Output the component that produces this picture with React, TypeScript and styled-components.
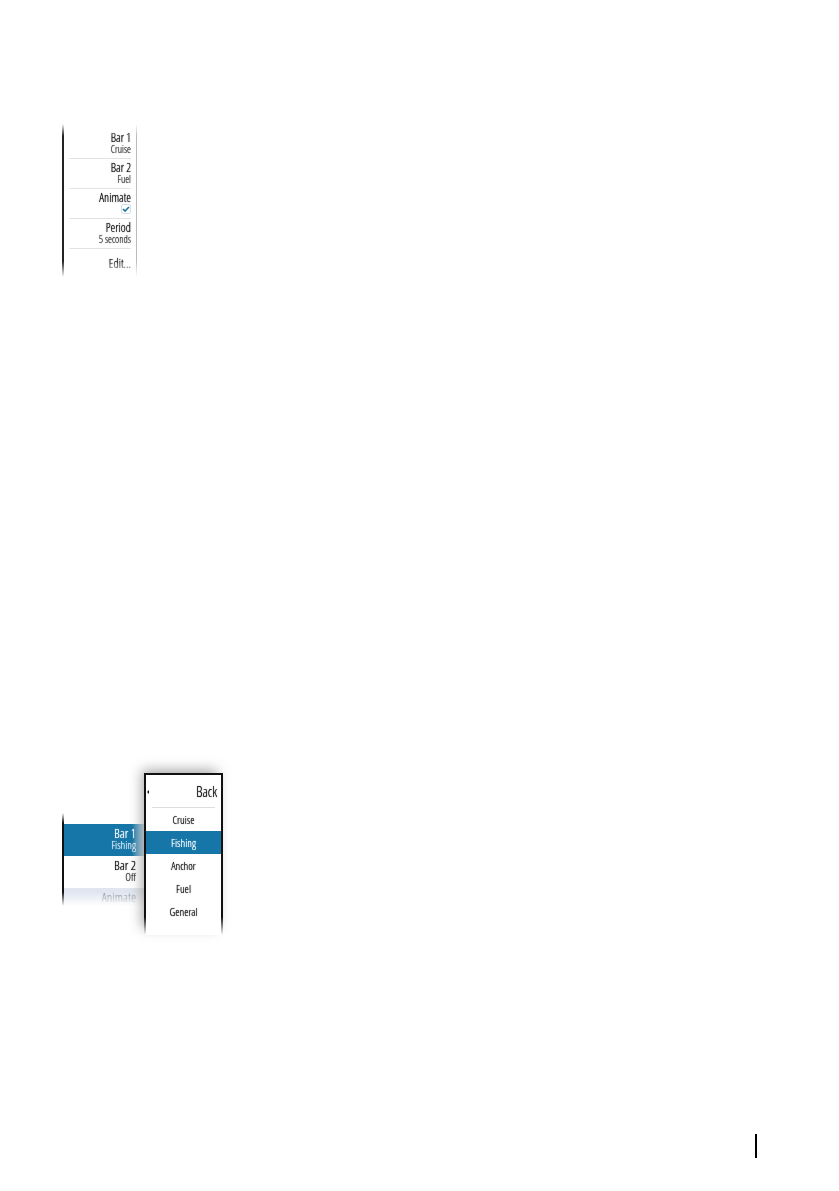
import { useState } from "react";
import styled, { createGlobalStyle } from "styled-components";

const GlobalStyle = createGlobalStyle`
    * {
        box-sizing: border-box;
    }

    body {
        margin: 0;
        background-color: #fff;
        color: #111;
        font-family: "Open Sans Condensed Light", "Liberation Sans Narrow",
            "Noto Sans", sans-serif;
        text-shadow: 0 0 1px currentColor;
    }

    button {
        border: none;
        background: none;
        color: inherit;
        font-family: inherit;
        text-shadow: inherit;
        cursor: pointer;
    }
`;

const Page = styled.main`
    display: flex;
    flex-direction: column;
    align-items: flex-start;
    min-height: 100vh;
    padding: 124px 82px 33px 62px;
`;

const Menu = styled.section`
    width: 75px;
    border-left: 2px solid #222;
    border-right: 1px solid #bbb;
    padding: 5px 5px 0 5px;
    mask-image: linear-gradient(
        transparent,
        #000 12px,
        #000 calc(100% - 16px),
        transparent
    );
`;

const MenuRow = styled.button`
    display: flex;
    flex-direction: column;
    align-items: flex-end;
    justify-content: center;
    width: 100%;
    height: 30px;
    padding: 0 0 1px;
    border-bottom: 1px solid #e2e2e2;

    &:last-child {
        height: 28px;
        padding: 2px 0 0;
        border-bottom: none;
    }
`;

const CheckRow = styled(MenuRow).attrs({ as: "label" })`
    cursor: pointer;
`;

const Label = styled.span`
    font-size: 12px;
    line-height: 12px;
`;

const Value = styled.span`
    font-size: 10px;
    line-height: 10px;
    opacity: 0.85;
`;

const Check = styled.input`
    appearance: none;
    width: 10px;
    height: 10px;
    margin: 0;
    border: 1px solid #d5dfe4;
    border-radius: 2px;
    background-color: #fff;

    &:checked {
        background-image: url("data:image/svg+xml,%3Csvg xmlns='http://www.w3.org/2000/svg' viewBox='0 0 8 8'%3E%3Cpath d='M1 4l2 2 4-4' fill='none' stroke='%231676a8' stroke-width='1.6'/%3E%3C/svg%3E");
    }
`;

const Picker = styled.section`
    display: flex;
    align-items: flex-start;
    margin-top: 496px;
`;

const SideMenu = styled.div`
    width: 82px;
    margin-top: 40px;
    padding-top: 11px;
    border-left: 2px solid #111;
    mask-image: linear-gradient(
        transparent,
        #000 10px,
        #000 calc(100% - 14px),
        transparent
    );
`;

const SideRow = styled.button<{ $active?: boolean }>`
    display: flex;
    flex-direction: column;
    align-items: flex-end;
    justify-content: center;
    width: 100%;
    height: 32px;
    padding: 0 8px 3px 0;
    background: ${({ $active }) =>
        $active
            ? "linear-gradient(to right, #1676a8 68px, #dbe6ee)"
            : "#fff"};
    color: ${({ $active }) => ($active ? "#fff" : "#111")};

    &:disabled {
        height: 18px;
        padding-bottom: 0;
        background: linear-gradient(to right, #dfe6f0 70px, #eee);
        color: #8d949e;
        cursor: default;
    }
`;

const SideLabel = styled(Label)`
    font-size: 13px;
`;

const SideValue = styled(Value)`
    font-size: 11px;
    line-height: 11px;
`;

const Popup = styled.div`
    z-index: 1;
    width: 79px;
    background-color: #fff;
    box-shadow: -4px -5px 12px -2px rgba(0, 0, 0, 0.35);
`;

const PopupBody = styled.div`
    height: 162px;
    border: 2px solid #111;
    border-bottom: none;
    mask-image: linear-gradient(#000 calc(100% - 18px), transparent);
`;

const BackButton = styled.button`
    display: flex;
    align-items: center;
    justify-content: space-between;
    width: 100%;
    height: 32px;
    padding: 2px 4px 0 1px;
    font-size: 14px;
    line-height: 16px;
`;

const Arrow = styled.span`
    border: 2px solid transparent;
    border-left: none;
    border-right-color: #111;
`;

const Divider = styled.hr`
    height: 1px;
    margin: 0 6px;
    border: none;
    background-color: #ddd;
`;

const Option = styled.button<{ $active: boolean }>`
    display: block;
    width: 100%;
    height: 23px;
    padding: 0;
    background-color: ${({ $active }) => ($active ? "#1676a8" : "#fff")};
    color: ${({ $active }) => ($active ? "#fff" : "#111")};
    font-size: 11px;
    line-height: 23px;
    text-align: center;
`;

const FooterMark = styled.footer`
    align-self: flex-end;
    width: 2px;
    height: 24px;
    margin-top: auto;
    background-color: #000;
`;

const options = ["Cruise", "Fishing", "Anchor", "Fuel", "General"];

const App = () => {
    const [selected, setSelected] = useState("Fishing");

    return (
        <Page>
            <GlobalStyle />
            <Menu>
                <MenuRow>
                    <Label>Bar 1</Label>
                    <Value>Cruise</Value>
                </MenuRow>
                <MenuRow>
                    <Label>Bar 2</Label>
                    <Value>Fuel</Value>
                </MenuRow>
                <CheckRow>
                    <Label>Animate</Label>
                    <Check type="checkbox" defaultChecked />
                </CheckRow>
                <MenuRow>
                    <Label>Period</Label>
                    <Value>5 seconds</Value>
                </MenuRow>
                <MenuRow>
                    <Label>Edit...</Label>
                </MenuRow>
            </Menu>
            <Picker>
                <SideMenu>
                    <SideRow $active>
                        <SideLabel>Bar 1</SideLabel>
                        <SideValue>{selected}</SideValue>
                    </SideRow>
                    <SideRow>
                        <SideLabel>Bar 2</SideLabel>
                        <SideValue>Off</SideValue>
                    </SideRow>
                    <SideRow disabled>
                        <SideLabel>Animate</SideLabel>
                    </SideRow>
                </SideMenu>
                <Popup>
                    <PopupBody>
                        <BackButton>
                            <Arrow />
                            Back
                        </BackButton>
                        <Divider />
                        {options.map((option) => (
                            <Option
                                key={option}
                                $active={option === selected}
                                onClick={() => setSelected(option)}
                            >
                                {option}
                            </Option>
                        ))}
                    </PopupBody>
                </Popup>
            </Picker>
            <FooterMark />
        </Page>
    );
};

export default App;
